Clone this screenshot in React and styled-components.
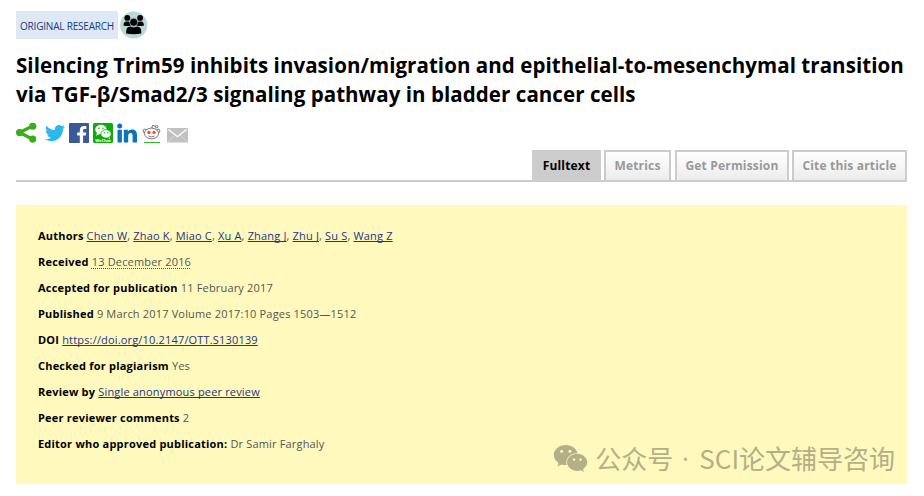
import React from 'react';
import styled, { createGlobalStyle } from 'styled-components';
import { FaTwitter, FaWeixin } from 'react-icons/fa';

const GlobalStyle = createGlobalStyle`
  * {
    box-sizing: border-box;
  }

  body {
    margin: 0;
    background: #fff;
    color: #555;
    font-family: 'Open Sans', 'Noto Sans', sans-serif;
    font-size: 11px;
  }
`;

const Page = styled.main`
  width: 924px;
  height: 496px;
  padding: 11px 17px 0 16px;
  overflow: hidden;
`;

const TypeRow = styled.div`
  display: flex;
  gap: 2px;
  height: 28px;
`;

const TypeBadge = styled.a`
  width: 102px;
  height: 28px;
  padding-left: 4px;
  background: #dfe9f5;
  color: #143c86;
  font-size: 10px;
  letter-spacing: -0.2px;
  line-height: 31px;
  white-space: nowrap;
`;

const Title = styled.h1`
  margin: 12px 0 0;
  color: #000;
  font-size: 20.5px;
  font-weight: 700;
  letter-spacing: 0.06px;
  line-height: 29px;
  white-space: nowrap;
`;

const ShareRow = styled.div`
  display: flex;
  height: 20px;
  margin-top: 14px;
  gap: 4px;
`;

const ShareLink = styled.a`
  flex: none;
  width: ${({ $width }) => $width || 20}px;
  height: 20px;
  color: ${({ $color }) => $color || 'inherit'};

  svg {
    display: block;
  }
`;

const TabBar = styled.nav`
  display: flex;
  justify-content: flex-end;
  height: 32px;
  margin-top: 7px;
  border-bottom: 2px solid #ccc;
`;

const Tab = styled.a`
  width: ${({ $width }) => $width}px;
  height: 32px;
  margin-left: ${({ $gap }) => $gap || 0}px;
  border: 2px solid #ccc;
  background: ${({ $active }) => ($active ? '#ccc' : 'linear-gradient(#fff, #ececec)')};
  color: ${({ $active }) => ($active ? '#000' : '#999')};
  font-size: 12px;
  font-weight: 700;
  letter-spacing: 0.18px;
  line-height: 28px;
  text-align: center;
  white-space: nowrap;
`;

const InfoPanel = styled.section`
  display: flex;
  flex-direction: column;
  height: 279px;
  margin-top: 23px;
  padding: 18px 12px 10px 22px;
  background: #fff9be;
`;

const InfoRow = styled.p`
  flex: none;
  height: 26px;
  margin: 0;
  letter-spacing: 0.17px;
  line-height: 26px;
  white-space: nowrap;

  strong {
    color: #000;
    font-weight: 700;
    letter-spacing: 0.21px;
  }

  abbr {
    text-decoration: underline dotted 1px;
    text-underline-offset: 2px;
    text-decoration-skip-ink: none;
  }
`;

const InfoLink = styled.a`
  color: #253585;
  text-decoration: underline 1px;
  text-underline-offset: 1px;
  text-decoration-skip-ink: none;
`;

const Watermark = styled.div`
  display: flex;
  align-items: center;
  align-self: flex-end;
  margin-top: -19px;
  height: 40px;
  color: #b4af86;
  font-family: 'Noto Sans CJK SC', sans-serif;
  font-size: 26px;
  line-height: 40px;
  white-space: nowrap;

  svg {
    margin-right: 7px;
  }
`;

const WatermarkDot = styled.span`
  display: inline-block;
  width: 26px;
  padding-right: 2px;
  font-family: 'Open Sans', sans-serif;
  text-align: center;
`;

const GroupIcon = () => (
  <svg width="28" height="28" viewBox="0 0 28 28">
    <circle cx="13.7" cy="14" r="13.6" fill="#b9d8d8" />
    <circle cx="7.3" cy="6.9" r="2.9" />
    <circle cx="20.1" cy="6.9" r="2.9" />
    <path d="M3.5 14.500q0-4.100 3-4.100h2q2 .5 2.500 4.100-3.700 1-7.500 0z" />
    <path d="M16.400 14.500q.5-3.600 2.500-4.100h2q3 0 3 4.100-3.800 1-7.500 0z" />
    <circle cx="13.7" cy="11.2" r="4" stroke="#b9d8d8" strokeWidth="0.6" />
    <path d="M6.200 22.500v-2.500q0-4 4-4.400l3.500 1 3.500-1q4 .4 4 4.400v2.500q-7.500 1.300-15 0z" />
  </svg>
);

const ShareIcon = () => (
  <svg width="21" height="20" viewBox="0 0 21 20">
    <path d="M16.700 3L3.500 9.500l13.200 6.700" fill="none" stroke="#37ad18" strokeWidth="3.2" />
    <circle cx="3.6" cy="9.600" r="3.600" fill="#37ad18" />
    <circle cx="16.7" cy="3.200" r="3.600" fill="#37ad18" />
    <circle cx="16.7" cy="16.100" r="3.600" fill="#37ad18" />
  </svg>
);

const FacebookIcon = () => (
  <svg width="20" height="20" viewBox="0 0 20 20">
    <rect width="20" height="20" rx="0.8" fill="#3b5998" />
    <path d="M10.800 20v-7.500H8.200V9.500h2.600V7.300c0-2.700 1.700-4.200 4.200-4.200h2.300v2.900h-1.600c-1.300 0-1.600.6-1.600 1.600v1.900h3.200l-.5 3h-2.700V20z" fill="#fff" />
  </svg>
);

const WechatIcon = () => (
  <svg width="20" height="20" viewBox="0 0 20 20">
    <rect width="20" height="20" rx="1.5" fill="#0dac0d" />
    <ellipse cx="7.9" cy="6.5" rx="5.7" ry="4.7" fill="#fff" />
    <path d="M4 9l-.7 3.800 4-2zM16.500 13l.5 3-3-1.500z" fill="#fff" />
    <ellipse cx="13" cy="10.9" rx="5.2" ry="4.2" fill="#fff" stroke="#0dac0d" strokeWidth="0.8" />
    <g fill="#0dac0d">
      <circle cx="5.9" cy="5.2" r="0.8" />
      <circle cx="9.9" cy="5.2" r="0.8" />
      <circle cx="11.3" cy="9.8" r="0.7" />
      <circle cx="14.8" cy="9.8" r="0.7" />
    </g>
    <text x="10" y="19" fill="#fff" fontFamily="Open Sans" fontSize="4" fontWeight="700" textAnchor="middle">WeChat</text>
  </svg>
);

const LinkedinIcon = () => (
  <svg width="20" height="20" viewBox="0 0 20 20" fill="#0b75b9">
    <circle cx="2.7" cy="3" r="2.5" />
    <path d="M.5 6.700h4.400V19.500H.5z" />
    <path d="M6.800 6.700h4.100v1.700c.8-1.300 2.100-2 3.900-2 3.700 0 5.200 2.100 5.200 5.700v7.400h-4.400v-6.600c0-2-.5-3-1.900-3-1.700 0-2.500 1.100-2.500 3v6.600H6.800z" />
  </svg>
);

const RedditIcon = () => (
  <svg width="20" height="20" viewBox="0 0 20 20">
    <g fill="#fff" stroke="#555" strokeWidth="0.8">
      <path d="M10.500 6l1-3.500 3.200.8" fill="none" />
      <circle cx="15.6" cy="3.6" r="1.2" />
      <circle cx="4" cy="8" r="1.9" />
      <circle cx="17" cy="8" r="1.9" />
      <ellipse cx="10.5" cy="10.5" rx="7" ry="5.4" />
      <path d="M7.400 13q3.100 2 6.200 0" fill="none" />
    </g>
    <circle cx="7.9" cy="9.4" r="1.6" fill="#ff4815" />
    <circle cx="13.1" cy="9.4" r="1.6" fill="#ff4815" />
    <path d="M3 19.500h16" stroke="#32b531" />
  </svg>
);

const MailIcon = () => (
  <svg width="21" height="20" viewBox="0 0 21 20">
    <rect y="5" width="21" height="14.5" rx="0.8" fill="#c1c1c1" />
    <path d="M1.500 6.500l9 7.200 9-7.200" fill="none" stroke="#fff" strokeWidth="1.4" />
    <path d="M1.500 18.300l6-5.600M19.500 18.300l-6-5.600" fill="none" stroke="#e4e4e4" strokeWidth="0.7" />
  </svg>
);

const authors = ['Chen W', 'Zhao K', 'Miao C', 'Xu A', 'Zhang J', 'Zhu J', 'Su S', 'Wang Z'];

const tabs = [
  { label: 'Fulltext', width: 69, active: true },
  { label: 'Metrics', width: 67, gap: 3 },
  { label: 'Get Permission', width: 114, gap: 4 },
  { label: 'Cite this article', width: 115, gap: 3 },
];

const App = () => {
  return (
    <>
      <GlobalStyle />
      <Page>
        <TypeRow>
          <TypeBadge>ORIGINAL RESEARCH</TypeBadge>
          <GroupIcon />
        </TypeRow>

        <Title>
          Silencing Trim59 inhibits invasion/migration and epithelial-to-mesenchymal transition
          <br />
          via TGF-β/Smad2/3 signaling pathway in bladder cancer cells
        </Title>

        <ShareRow>
          <ShareLink $width={25}><ShareIcon /></ShareLink>
          <ShareLink $color="#2bb8ee"><FaTwitter size={20} /></ShareLink>
          <ShareLink><FacebookIcon /></ShareLink>
          <ShareLink><WechatIcon /></ShareLink>
          <ShareLink><LinkedinIcon /></ShareLink>
          <ShareLink $width={22}><RedditIcon /></ShareLink>
          <ShareLink $width={21}><MailIcon /></ShareLink>
        </ShareRow>

        <TabBar>
          {tabs.map(({ label, width, gap, active }) => (
            <Tab key={label} $width={width} $gap={gap} $active={active}>{label}</Tab>
          ))}
        </TabBar>

        <InfoPanel>
          <InfoRow>
            <strong>Authors</strong>{' '}
            {authors.map((name, i) => (
              <React.Fragment key={name}>
                {i > 0 && ', '}
                <InfoLink>{name}</InfoLink>
              </React.Fragment>
            ))}
          </InfoRow>
          <InfoRow><strong>Received</strong> <abbr>13 December 2016</abbr></InfoRow>
          <InfoRow><strong>Accepted for publication</strong> 11 February 2017</InfoRow>
          <InfoRow><strong>Published</strong> 9 March 2017 Volume 2017:10 Pages 1503—1512</InfoRow>
          <InfoRow><strong>DOI</strong> <InfoLink>https://doi.org/10.2147/OTT.S130139</InfoLink></InfoRow>
          <InfoRow><strong>Checked for plagiarism</strong> Yes</InfoRow>
          <InfoRow><strong>Review by</strong> <InfoLink>Single anonymous peer review</InfoLink></InfoRow>
          <InfoRow><strong>Peer reviewer comments</strong> 2</InfoRow>
          <InfoRow><strong>Editor who approved publication:</strong> Dr Samir Farghaly</InfoRow>
          <Watermark>
            <FaWeixin size={35} />
            <span>公众号</span>
            <WatermarkDot>·</WatermarkDot>
            <span>SCI论文辅导咨询</span>
          </Watermark>
        </InfoPanel>
      </Page>
    </>
  );
};

export default App;
